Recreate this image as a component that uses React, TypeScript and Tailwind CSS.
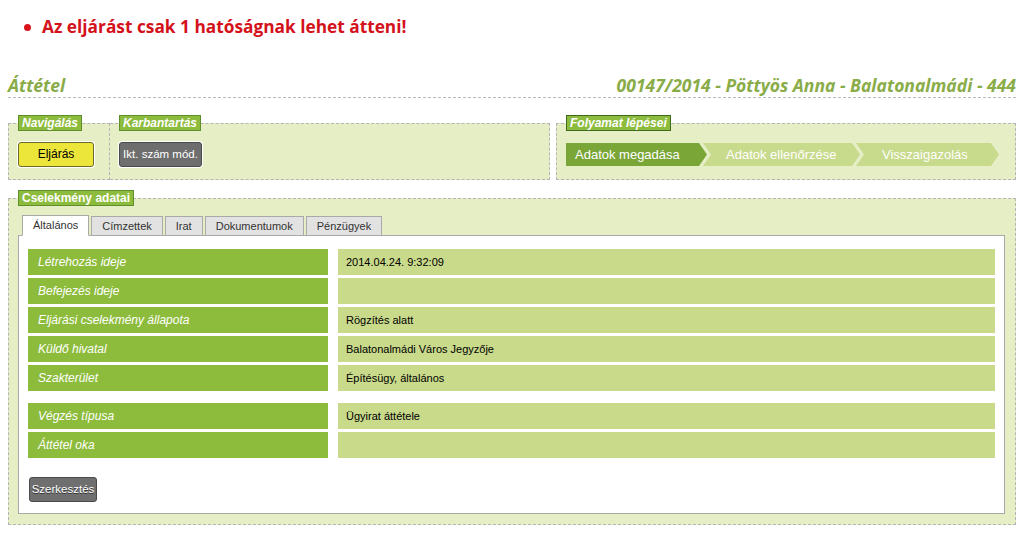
const steps = [
  {
    label: "Adatok megadása",
    cls: "w-[141px] pl-[9px] bg-[#79a637] [clip-path:polygon(0_0,calc(100%_-_8px)_0,100%_50%,calc(100%_-_8px)_100%,0_100%)]",
  },
  {
    label: "Adatok ellenőrzése",
    cls: "w-[157px] -ml-[4px] pl-[23px] bg-[#c8da8c] [clip-path:polygon(0_0,calc(100%_-_8px)_0,100%_50%,calc(100%_-_8px)_100%,0_100%,8px_50%)]",
  },
  {
    label: "Visszaigazolás",
    cls: "w-[143px] -ml-[4px] pl-[26px] bg-[#c8da8c] [clip-path:polygon(0_0,calc(100%_-_8px)_0,100%_50%,calc(100%_-_8px)_100%,0_100%,8px_50%)]",
  },
];

const tabs = ["Általános", "Címzettek", "Irat", "Dokumentumok", "Pénzügyek"];

const rowsTop = [
  ["Létrehozás ideje", "2014.04.24. 9:32:09"],
  ["Befejezés ideje", ""],
  ["Eljárási cselekmény állapota", "Rögzítés alatt"],
  ["Küldő hivatal", "Balatonalmádi Város Jegyzője"],
  ["Szakterület", "Építésügy, általános"],
];

const rowsBottom = [
  ["Végzés típusa", "Ügyirat áttétele"],
  ["Áttétel oka", ""],
];

function Legend({ children, dark }: { children: React.ReactNode; dark?: boolean }) {
  return (
    <legend
      className={
        "h-[16px] px-[3px] bg-[#8cbb3d] border text-white text-[12px] leading-[14px] font-bold italic " +
        (dark ? "border-[#3f6a1c]" : "border-[#5e8f2a]")
      }
    >
      {children}
    </legend>
  );
}

function Rows({ rows }: { rows: string[][] }) {
  return (
    <div className="grid grid-cols-[300px_1fr] gap-x-[10px] gap-y-[3px]">
      {rows.map(([label, value]) => (
        <div key={label} className="contents">
          <div className="h-[26px] bg-[#8dbc3c] pl-[10px] flex items-center text-white italic text-[12px]">
            {label}
          </div>
          <div className="h-[26px] bg-[#c9da8b] pl-[8px] flex items-center text-black text-[11px]">
            {value}
          </div>
        </div>
      ))}
    </div>
  );
}

export default function App() {
  return (
    <div className="min-h-screen bg-white px-[8px] font-['Liberation_Sans',Arial,sans-serif] text-black">
      {/* alert */}
      <div className="pt-[16px] pl-[16px] flex items-center h-[38px]">
        <span className="w-[7px] h-[7px] rounded-full bg-[#d8131c] mr-[11px]" />
        <span className="font-['Open_Sans',sans-serif] font-bold text-[17.3px] leading-[22px] text-[#d4121b]">
          Az eljárást csak 1 hatóságnak lehet átteni!
        </span>
      </div>

      {/* header */}
      <div className="mt-[37px] flex justify-between items-end pb-[2px] border-b border-dashed border-[#b9b9b9] font-['Open_Sans',sans-serif] font-bold italic text-[17.5px] leading-[20px] text-[#89ac48]">
        <span>Áttétel</span>
        <span>00147/2014 - Pöttyös Anna - Balatonalmádi - 444</span>
      </div>

      {/* top panels */}
      <div className="mt-[17px] flex gap-[6px]">
        <div className="flex">
          <fieldset className="w-[102px] bg-[#e6eec6] border border-dashed border-[#b5b5b5] pl-[9px] pr-[8px] pt-[10px] pb-[12px]">
            <Legend>Navigálás</Legend>
            <button className="w-[76px] h-[25px] rounded-[3px] bg-[#ece63a] border border-[#6d6a2a] shadow-[0_0_0_1px_#ffffff] text-[12px] text-black">
              Eljárás
            </button>
          </fieldset>
          <fieldset className="w-[440px] bg-[#e6eec6] border border-l-0 border-dashed border-[#b5b5b5] pl-[9px] pt-[10px] pb-[12px]">
            <Legend>Karbantartás</Legend>
            <button className="w-[83px] h-[25px] rounded-[3px] bg-[#6e6e6e] border border-[#4a4a4a] shadow-[0_0_0_1px_#ffffff] text-[11.5px] text-white">
              Ikt. szám mód.
            </button>
          </fieldset>
        </div>
        <fieldset className="flex-1 bg-[#e6eec6] border border-dashed border-[#b5b5b5] pl-[9px] pt-[12px] pb-[12px]">
          <Legend dark>Folyamat lépései</Legend>
          <div className="flex h-[23px]">
            {steps.map((s) => (
              <div key={s.label} className={"h-[23px] flex items-center text-white text-[13px] " + s.cls}>
                {s.label}
              </div>
            ))}
          </div>
        </fieldset>
      </div>

      {/* main */}
      <fieldset className="mt-[10px] bg-[#e6eec6] border border-dashed border-[#b5b5b5] pl-[9px] pr-[10px] pt-[9px] pb-[10px]">
        <Legend>
          <span className="not-italic">Cselekmény adatai</span>
        </Legend>
        <div className="ml-[4px] flex gap-[2px] relative z-10 -mb-px">
          {tabs.map((t, i) => (
            <div
              key={t}
              className={
                "px-[10px] flex items-center border border-[#a9a9a9] text-[11px] text-[#333] " +
                (i === 0 ? "h-[21px] bg-white border-b-white" : "h-[20px] mt-px bg-[#e2e2e2]")
              }
            >
              {t}
            </div>
          ))}
        </div>
        <div className="bg-white border border-[#a9a9a9] pl-[9px] pr-[9px] pt-[13px] pb-[11px]">
          <Rows rows={rowsTop} />
          <div className="mt-[12px]">
            <Rows rows={rowsBottom} />
          </div>
          <button className="mt-[19px] ml-px w-[68px] h-[25px] rounded-[3px] bg-[#6f6f6f] border border-[#4a4a4a] text-white text-[11.5px] [text-shadow:0_1px_0_#333]">
            Szerkesztés
          </button>
        </div>
      </fieldset>
    </div>
  );
}
